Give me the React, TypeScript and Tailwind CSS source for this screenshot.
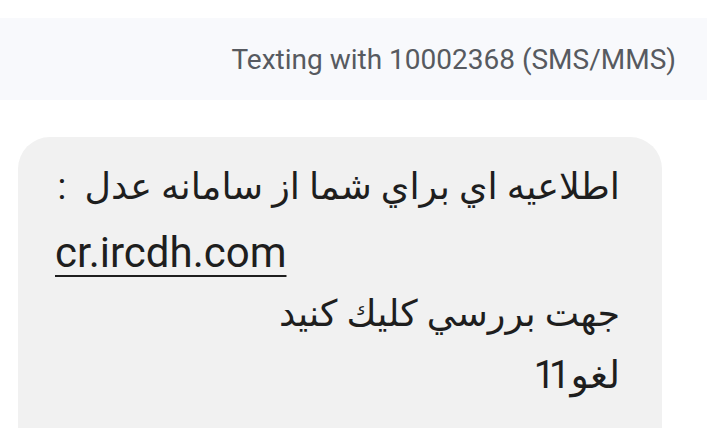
import React from "react";

export default function App() {
  const ar = { fontFamily: 'Roboto, "DejaVu Sans", sans-serif' };
  return (
    <div className="w-[707px] h-[428px] overflow-hidden bg-white flex flex-col" style={{ fontFamily: 'Roboto, "Liberation Sans", sans-serif' }}>
      <div className="h-[18px] shrink-0 bg-white" />
      <div className="h-[82px] shrink-0 bg-[#f8f9fc] flex items-center justify-end pr-[31px] pt-[2px]">
        <span className="text-[28px] text-[#575a60]">Texting with 10002368 (SMS/MMS)</span>
      </div>
      <div className="shrink-0 pt-[37px] pl-[18px]">
        <div className="w-[644px] h-[300px] bg-[#f1f1f1] rounded-t-[32px] pl-[37px] pr-[42px] pt-[18px] text-[#1e1e1e]">
          <div dir="rtl" className="h-[64px] flex items-center text-[36.5px]" style={ar}>اطلاعيه اي براي شما از سامانه عدل{"\u00a0"} :</div>
          <div className="h-[66px] flex items-center">
            <span className="text-[42px] underline decoration-[2px] underline-offset-[8px]">cr.ircdh.com</span>
          </div>
          <div dir="rtl" className="h-[58px] flex items-center text-[36.5px]" style={ar}>جهت بررسي كليك كنيد</div>
          <div dir="rtl" className="h-[64px] flex items-center text-[38px]" style={ar}>
            <span>لغو</span>
            <span dir="ltr" className="inline-block tracking-[-6px] pr-[6px] ml-[-2px]">11</span>
          </div>
        </div>
      </div>
    </div>
  );
}
